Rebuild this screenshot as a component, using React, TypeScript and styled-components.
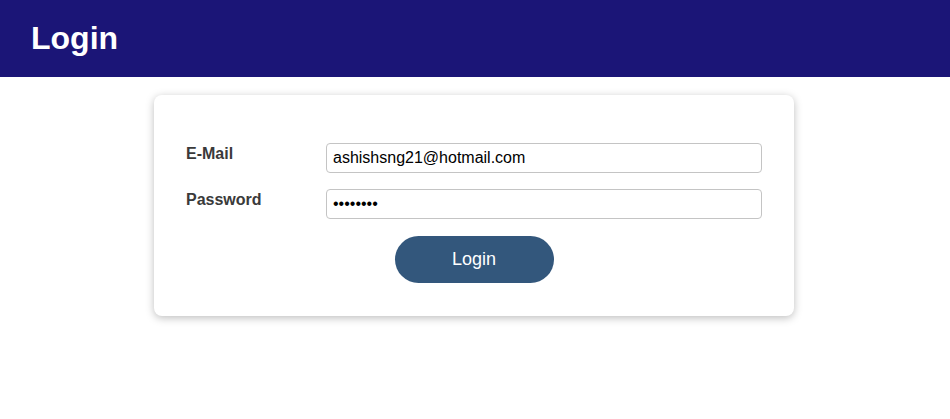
import React from 'react'
import styled, { createGlobalStyle } from 'styled-components'

const GlobalStyle = createGlobalStyle`
  html, body {
    margin: 0;
    padding: 0;
    background: #ffffff;
    font-family: 'Liberation Sans', Arial, sans-serif;
  }
`

const Header = styled.header`
  height: 77px;
  background: #1b1577;
  display: flex;
  align-items: center;
  padding: 0 31px;
  box-sizing: border-box;
`

const Title = styled.h1`
  margin: 0;
  color: #ffffff;
  font-size: 32px;
  font-weight: bold;
`

const Main = styled.main`
  padding: 18px 2px 24px 0;
`

const Card = styled.form`
  width: 640px;
  margin: 0 auto;
  padding: 48px 32px 33px;
  box-sizing: border-box;
  background: #ffffff;
  border-radius: 8px;
  box-shadow: 0 2px 8px rgba(0, 0, 0, 0.26);
  display: flex;
  flex-direction: column;
  gap: 16px;
`

const Row = styled.div`
  display: flex;
  align-items: flex-start;
`

const Label = styled.label`
  width: 140px;
  flex-shrink: 0;
  padding-top: 2px;
  font-size: 16px;
  font-weight: bold;
  color: #3a3a3a;
`

const Input = styled.input`
  flex: 1;
  height: 30px;
  box-sizing: border-box;
  border: 1px solid #c4c4c4;
  border-radius: 4px;
  padding: 0 6px;
  font-family: 'Liberation Sans', Arial, sans-serif;
  font-size: 16px;
  color: #000000;
  outline: none;
`

const Actions = styled.div`
  display: flex;
  justify-content: center;
  margin-top: 1px;
`

const Button = styled.button`
  width: 159px;
  height: 47px;
  border: none;
  border-radius: 24px;
  background: #33577c;
  color: #ffffff;
  font-family: 'Liberation Sans', Arial, sans-serif;
  font-size: 18px;
  cursor: pointer;
`

const App: React.FC = () => {
  return (
    <>
      <GlobalStyle />
      <Header>
        <Title>Login</Title>
      </Header>
      <Main>
        <Card onSubmit={(e) => e.preventDefault()}>
          <Row>
            <Label htmlFor="email">E-Mail</Label>
            <Input id="email" type="email" defaultValue="ashishsng21@hotmail.com" />
          </Row>
          <Row>
            <Label htmlFor="password">Password</Label>
            <Input id="password" type="password" defaultValue="password" />
          </Row>
          <Actions>
            <Button type="submit">Login</Button>
          </Actions>
        </Card>
      </Main>
    </>
  )
}

export default App
